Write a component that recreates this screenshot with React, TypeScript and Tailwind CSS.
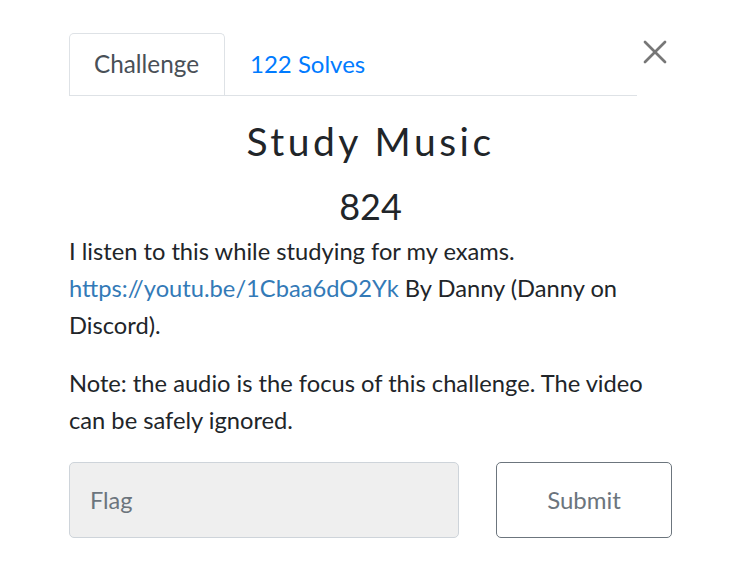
import { X } from "lucide-react"

export default function App() {
  return (
    <div className="relative w-[742px] h-[571px] bg-white font-['Lato',sans-serif] text-[#212529]">
      <button className="absolute left-[635px] top-[32px] text-[#777]">
        <X size={40} strokeWidth={1.6} />
      </button>
      <div className="pl-[69px] pt-[33px] w-[672px]">
        <div className="flex w-[568px] border-b border-[#dee2e6]">
          <div className="h-[62px] pl-[24px] pr-[25px] flex items-center border border-b-0 border-[#dee2e6] rounded-t-[5px] bg-white -mb-px text-[24.3px] text-[#495057]">
            Challenge
          </div>
          <div className="h-[62px] px-[25px] flex items-center text-[24px] text-[#007bff]">
            122 Solves
          </div>
        </div>
        <h2 className="mt-[22px] text-center text-[39px] leading-[47px] tracking-[0.09em]">Study Music</h2>
        <h3 className="mt-[20px] text-center text-[36px] leading-[43px]">824</h3>
        <div className="mt-[5px] text-[23.7px] leading-[37px]">
          <p>
            I listen to this while studying for my exams.{" "}
            <a className="text-[#337ab7]">https://youtu.be/1Cbaa6dO2Yk</a> By Danny (Danny on Discord).
          </p>
          <p className="mt-[21px]">Note: the audio is the focus of this challenge. The video can be safely ignored.</p>
        </div>
        <div className="mt-[23px] flex gap-[37px]">
          <input
            placeholder="Flag"
            className="w-[390px] h-[76px] rounded-[5px] border border-[#ced4da] bg-[#efefef] px-[20px] text-[23.5px] placeholder:text-[#6c757d] outline-none"
          />
          <button className="w-[176px] h-[76px] rounded-[5px] border border-[#6c757d] text-[24px] text-[#6c757d]">
            Submit
          </button>
        </div>
      </div>
    </div>
  )
}
